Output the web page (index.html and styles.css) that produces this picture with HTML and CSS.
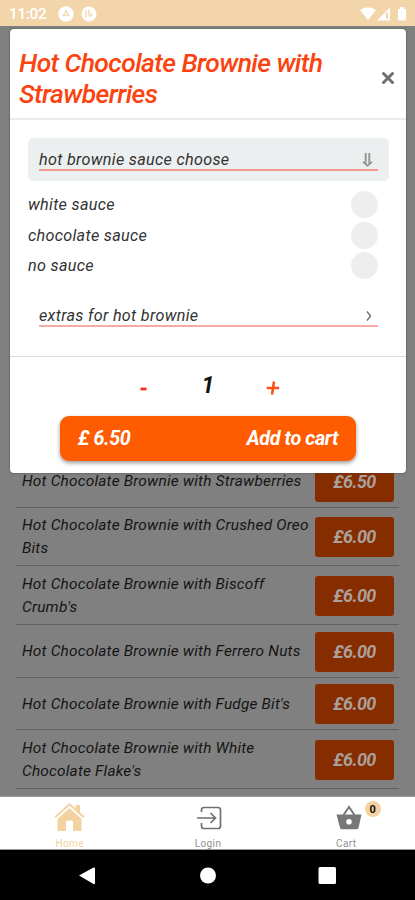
FILE: index.html
```html
<!DOCTYPE html>
<html lang="en">
<head>
<meta charset="utf-8">
<title>Hot Chocolate Brownie with Strawberries</title>
<link rel="stylesheet" href="styles.css">
</head>
<body>
<header class="status">
  <span class="clock">11:02</span>
  <svg class="status-app" width="40" height="18" viewBox="0 0 40 18"><circle cx="8" cy="9" r="7.7" fill="#fff"/><path d="M4.8 11.200 8 5.600l3.200 5.600M6 11l2-1.400 2 1.400" fill="none" stroke="#f3d5aa" stroke-width="1.100"/><circle cx="31" cy="9" r="7.500" fill="#fff"/><path d="M28 5v7.500M31 4.500v6.500a2.800 2.800 0 0 0 3-2.800" fill="none" stroke="#f3d5aa" stroke-width="1.300"/></svg>
  <svg class="status-system" width="48" height="16" viewBox="0 0 48 16"><path d="M0 4Q8-1.5 16 4L8 14z" fill="#fff"/><path d="M17 14.5 30 1.5v13z" fill="#fff"/><path d="M26 6.5h2v6h-2z" fill="#f3d5aa"/><path d="M38 3h2V1h4v2h2v11.5h-8z" fill="#fff"/></svg>
</header>

<main class="screen">
  <section class="menu">
    <div class="item"><span class="item-name">Hot Chocolate Brownie with Strawberries</span><span class="price">£6.50</span></div>
    <div class="item tall"><span class="item-name">Hot Chocolate Brownie with Crushed Oreo<br>Bits</span><span class="price">£6.00</span></div>
    <div class="item tall"><span class="item-name">Hot Chocolate Brownie with Biscoff<br>Crumb's</span><span class="price">£6.00</span></div>
    <div class="item"><span class="item-name">Hot Chocolate Brownie with Ferrero Nuts</span><span class="price">£6.00</span></div>
    <div class="item"><span class="item-name">Hot Chocolate Brownie with Fudge Bit's</span><span class="price">£6.00</span></div>
    <div class="item tall"><span class="item-name">Hot Chocolate Brownie with White<br>Chocolate Flake's</span><span class="price">£6.00</span></div>
  </section>

  <section class="dialog">
    <div class="dialog-head">
      <h1>Hot Chocolate Brownie with<br>Strawberries</h1>
      <svg class="close" width="14" height="14" viewBox="0 0 14 14"><path d="M2.5 2.5l9 9M11.5 2.5l-9 9" stroke="#707070" stroke-width="3" stroke-linecap="round"/></svg>
    </div>
    <div class="dialog-body">
      <div class="group open">
        <div class="group-line"><span>hot brownie sauce choose</span>
          <svg width="11" height="15" viewBox="0 0 11 15"><path d="M3.700 1v10.500M7.300 1v10.500" stroke="#959595" stroke-width="1.900"/><path d="M1 9.800 5.500 13.800 10 9.800" fill="none" stroke="#858585" stroke-width="1.500"/></svg>
        </div>
      </div>
      <div class="choices">
        <div class="choice"><span>white sauce</span><i class="radio"></i></div>
        <div class="choice"><span>chocolate sauce</span><i class="radio"></i></div>
        <div class="choice"><span>no sauce</span><i class="radio"></i></div>
      </div>
      <div class="group extras">
        <div class="group-line"><span>extras for hot brownie</span>
          <svg width="11" height="15" viewBox="0 0 11 15"><path d="M5 3.500 8.500 8 5 12.500" fill="none" stroke="#707070" stroke-width="1.400"/></svg>
        </div>
      </div>
    </div>
    <div class="dialog-foot">
      <div class="quantity">
        <svg width="8" height="24" viewBox="0 0 8 24"><path d="M1.500 16h6" stroke="#f2301c" stroke-width="2.800"/></svg>
        <span class="count">1</span>
        <svg width="14" height="24" viewBox="0 0 14 24"><path d="M.8 15h12.400M8 8.500 6 21.500" stroke="#fa5017" stroke-width="2.500"/></svg>
      </div>
      <div class="add"><span>£ 6.50</span><span>Add to cart</span></div>
    </div>
  </section>
</main>

<nav class="tabs">
  <div class="tab active">
    <svg width="31" height="29" viewBox="0 0 31 29"><path d="M15.500 5 27.500 16v12H19v-8.500a2 2 0 0 0-2-2h-3a2 2 0 0 0-2 2V28H3.500V16z" fill="#f3d2a0"/><path d="M1.200 14.300 15.500 1.300 29.800 14.300" fill="none" stroke="#f3d2a0" stroke-width="1.900"/><path d="M21.500 2H26v8l-4.500-4z" fill="#f3d2a0"/></svg>
    <span>Home</span>
  </div>
  <div class="tab">
    <svg width="31" height="29" viewBox="0 0 31 29"><path d="M9.500 9V7q0-2.500 2.500-2.500h14q2.500 0 2.500 2.500v16q0 2.500-2.500 2.500H12q-2.500 0-2.500-2.500V20M5 15h18M18.500 10l5 5-5 5" fill="none" stroke="#707070" stroke-width="1.700"/></svg>
    <span>Login</span>
  </div>
  <div class="tab cart">
    <svg width="31" height="29" viewBox="0 0 31 29"><path d="M12.500 12 18 4l5.500 8" fill="none" stroke="#777" stroke-width="2"/><path d="M5.500 11.500h25L27.500 25q-.4 1.300-2 1.300H11q-1.600 0-2-1.300z" fill="#777"/><circle cx="18" cy="18.800" r="2.800" fill="#fff"/></svg>
    <span>Cart</span><b class="badge">0</b>
  </div>
</nav>
<footer class="system">
  <svg width="18" height="20" viewBox="0 0 18 20"><path d="M0 9.500 14.500 1.500Q16 1 16 2.500v14.500q0 1.500-1.500 1z" fill="#fff"/></svg>
  <svg width="18" height="20" viewBox="0 0 18 20"><circle cx="9" cy="9.500" r="8" fill="#fff"/></svg>
  <svg width="18" height="20" viewBox="0 0 18 20"><rect x=".5" y="1" width="17.500" height="17" rx="1.500" fill="#fff"/></svg>
</footer>
</body>
</html>
```
FILE: styles.css
```css
* { box-sizing: border-box; }
body {
  margin: 0;
  width: 415px;
  height: 900px;
  display: flex;
  flex-direction: column;
  overflow: hidden;
  font-family: Roboto, sans-serif;
  background: #808080;
}
svg { display: block; flex: none; }
.status {
  height: 26px;
  flex: none;
  display: flex;
  align-items: center;
  padding: 1px 15px 0 9px;
  background: #f3d5aa;
  color: #fff;
}
.clock { width: 49px; font-size: 15.3px; font-weight: 500; line-height: 18px; letter-spacing: -.3px; }
.status-system { margin-left: auto; margin-right: -8px; }
.screen {
  position: relative;
  height: 771px;
  flex: none;
  background: #808080;
  border-bottom: 1px solid #999;
}
.menu {
  height: 100%;
  display: flex;
  flex-direction: column;
  justify-content: flex-end;
  padding: 0 16px 7px;
}
.item {
  height: 52.700px;
  flex: none;
  display: flex;
  align-items: center;
  justify-content: space-between;
  padding: 2px 5px 0 6px;
  border-bottom: 1.500px solid #636363;
  color: #151515;
  font-size: 15.400px;
  font-style: italic;
  line-height: 23.500px;
  white-space: nowrap;
}
.item.tall { height: 58.700px; }
.item-name { letter-spacing: .2px; }
.price {
  width: 79px;
  height: 40px;
  flex: none;
  border-radius: 3px;
  background: #862d00;
  color: #aaa09c;
  font-size: 18px;
  font-weight: 700;
  letter-spacing: -.6px;
  line-height: 40px;
  text-align: center;
}
.dialog {
  position: absolute;
  top: 3px;
  left: 10px;
  width: 396px;
  height: 444px;
  display: flex;
  flex-direction: column;
  border-radius: 4px;
  background: #fff;
  box-shadow: 0 0 2px #444;
  font-style: italic;
}
.dialog-head {
  height: 91px;
  flex: none;
  display: flex;
  align-items: center;
  justify-content: space-between;
  padding: 8px 11px 0 9px;
  border-bottom: 2px solid #ebebeb;
}
h1 {
  margin: 0;
  padding-top: 2px;
  color: #fb4310;
  font-size: 26.500px;
  font-weight: 500;
  letter-spacing: -.6px;
  line-height: 30.500px;
  white-space: nowrap;
}
.dialog-body {
  height: 237px;
  flex: none;
  padding: 18px 17px 0 18px;
  color: #333;
  font-size: 16.200px;
  letter-spacing: .3px;
  border-bottom: 1px solid #ddd;
}
.group { height: 43px; padding: 10px 11px 0; border-radius: 5px; }
.group.open { background: #ebefef; }
.group-line {
  height: 23px;
  display: flex;
  align-items: center;
  justify-content: space-between;
  padding: 2px 5px 0 0;
  border-bottom: 2px solid #f09b8d;
  line-height: 19px;
}
.extras .group-line { border-bottom-color: #f5aaa4; }
.choices { padding: 8px 11px 13px 0; }
.choice { height: 30.700px; display: flex; align-items: center; justify-content: space-between; }
.radio { width: 27px; height: 27px; border-radius: 50%; background: #eee; }
.dialog-foot { padding: 16px 50px 0; }
.quantity { display: flex; align-items: center; justify-content: space-between; height: 24px; padding: 0 76px 0 79px; }
.count { padding: 2px 0 0 3px; color: #111; font-size: 23px; font-weight: 700; line-height: 24px; }
.add {
  height: 45px;
  display: flex;
  align-items: center;
  justify-content: space-between;
  margin-top: 19px;
  padding: 0 18px;
  border-radius: 9px;
  background: #ff5b00;
  box-shadow: 0 2px 4px rgba(0, 0, 0, .4);
  color: #fff;
  font-size: 19.800px;
  font-weight: 700;
  letter-spacing: -.4px;
}
.tabs { height: 53px; flex: none; display: flex; background: #fff; border-bottom: 1px solid #999; }
.tab {
  position: relative;
  flex: 1;
  display: flex;
  flex-direction: column;
  align-items: center;
  gap: 2px;
  padding: 6px 0 0 1px;
  color: #909090;
  font-size: 10px;
  line-height: 19px;
  letter-spacing: .4px;
}
.tab.active { color: #f3d2a0; }
.badge {
  position: absolute;
  left: 88px;
  top: 4px;
  width: 16px;
  height: 16px;
  border-radius: 50%;
  background: #f3d2a0;
  color: #111;
  font-size: 11px;
  line-height: 17px;
  letter-spacing: 0;
  text-align: center;
}
.system {
  height: 50px;
  flex: none;
  display: flex;
  justify-content: space-between;
  padding: 16px 79px 0;
  background: #000;
}
```
